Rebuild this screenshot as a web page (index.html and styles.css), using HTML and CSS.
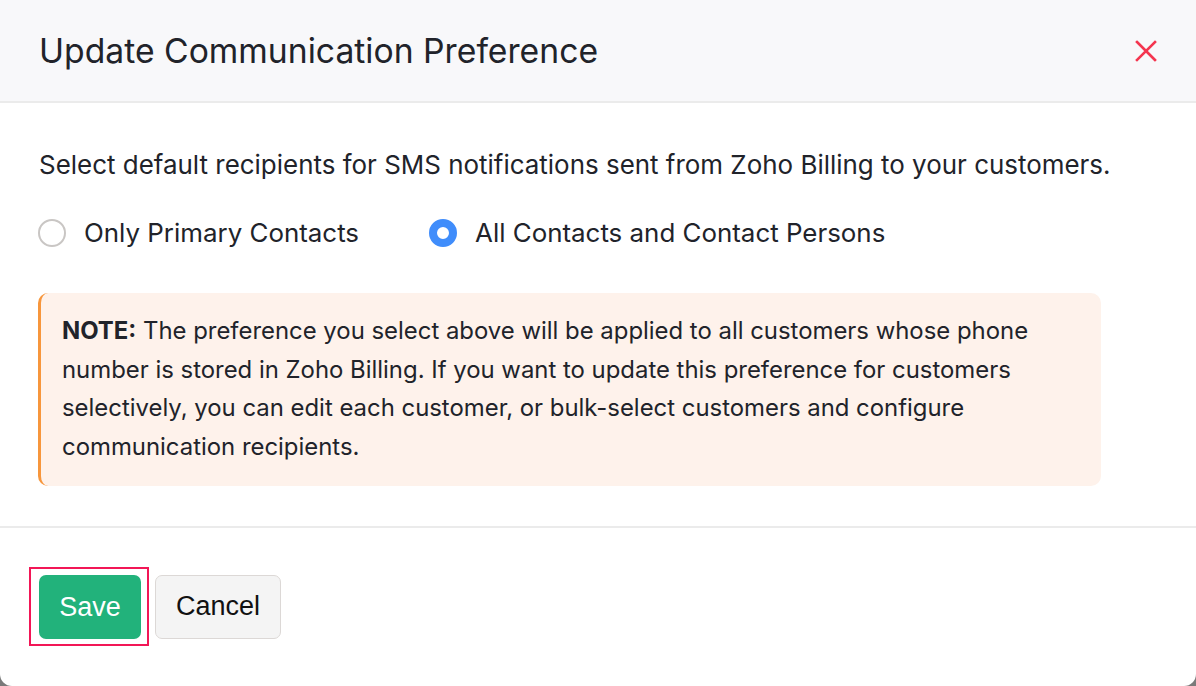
FILE: index.html
```html
<!DOCTYPE html>
<html>
<head>
<meta charset="utf-8">
<link rel="stylesheet" href="styles.css">
</head>
<body>
<div class="modal">
  <div class="header">
    <h1 class="title">Update Communication Preference</h1>
    <span class="close" aria-label="Close">
      <svg width="22" height="22" viewBox="0 0 22 22"><path d="M2 2 L20 20 M20 2 L2 20" stroke="#f4354f" stroke-width="2.6" stroke-linecap="square"/></svg>
    </span>
  </div>
  <div class="body">
    <p class="lead">Select default recipients for SMS notifications sent from Zoho Billing to your customers.</p>
    <div class="radios">
      <label class="radio"><span class="dot"></span>Only Primary Contacts</label>
      <label class="radio checked"><span class="dot"></span>All Contacts and Contact Persons</label>
    </div>
    <div class="note"><b>NOTE:</b> The preference you select above will be applied to all customers whose phone number is stored in Zoho Billing. If you want to update this preference for customers selectively, you can edit each customer, or bulk-select customers and configure communication recipients.</div>
  </div>
  <div class="footer">
    <span class="focus"><button class="btn save">Save</button></span>
    <button class="btn cancel">Cancel</button>
  </div>
</div>
</body>
</html>
```

FILE: styles.css
```css
html, body { margin: 0; padding: 0; }
body {
  width: 1196px;
  height: 686px;
  background: #7a7a7a;
  font-family: Inter, "Noto Sans", sans-serif;
  color: #21232a;
  overflow: hidden;
}
.modal {
  width: 1196px;
  height: 686px;
  background: #fff;
  border-radius: 0 0 12px 12px;
  display: flex;
  flex-direction: column;
  overflow: hidden;
}
.header {
  height: 101px;
  background: #f8f8fa;
  border-bottom: 2px solid #ebebeb;
  display: flex;
  align-items: center;
  justify-content: space-between;
  padding: 0 39px;
  box-sizing: content-box;
}
.title {
  margin: 0;
  font-weight: 400;
  font-size: 33.7px;
  color: #21232a;
}
.close { display: flex; margin-right: 0; }
.body {
  padding: 46px 39px 40px 38px;
  border-bottom: 2px solid #ebebeb;
}
.lead {
  margin: 0 0 0 1px;
  font-size: 25.95px;
  line-height: 32px;
}
.radios {
  display: flex;
  gap: 70px;
  margin-top: 36px;
}
.radio {
  display: flex;
  align-items: center;
  gap: 18px;
  font-size: 25.9px;
  line-height: 32px;
}
.dot {
  width: 28px;
  height: 28px;
  box-sizing: border-box;
  border: 2px solid #c9c6c4;
  border-radius: 50%;
  background: #fff;
}
.checked .dot {
  border: 8px solid #408dfb;
}
.note {
  margin-top: 44px;
  width: 1063px;
  box-sizing: border-box;
  background: #fef2eb;
  border-left: 3px solid #f7963c;
  border-radius: 10px;
  padding: 19px 30px 20px 21px;
  font-size: 23.9px;
  line-height: 38.5px;
  color: #21232a;
}
.note b { font-weight: 700; }
.footer {
  display: flex;
  align-items: center;
  gap: 6px;
  padding: 39px 0 0 29px;
}
.focus {
  display: flex;
  border: 2px solid #f21656;
  padding: 6px 6px 5px 8px;
}
.btn {
  font-family: "Liberation Sans", Arial, sans-serif;
  font-size: 27px;
  height: 64px;
  border-radius: 7px;
  cursor: pointer;
}
.save {
  width: 102px;
  background: #22b27b;
  color: #fff;
  border: none;
}
.cancel {
  width: 126px;
  background: #f4f4f4;
  color: #111;
  border: 1.5px solid #dcd8d6;
}
```
